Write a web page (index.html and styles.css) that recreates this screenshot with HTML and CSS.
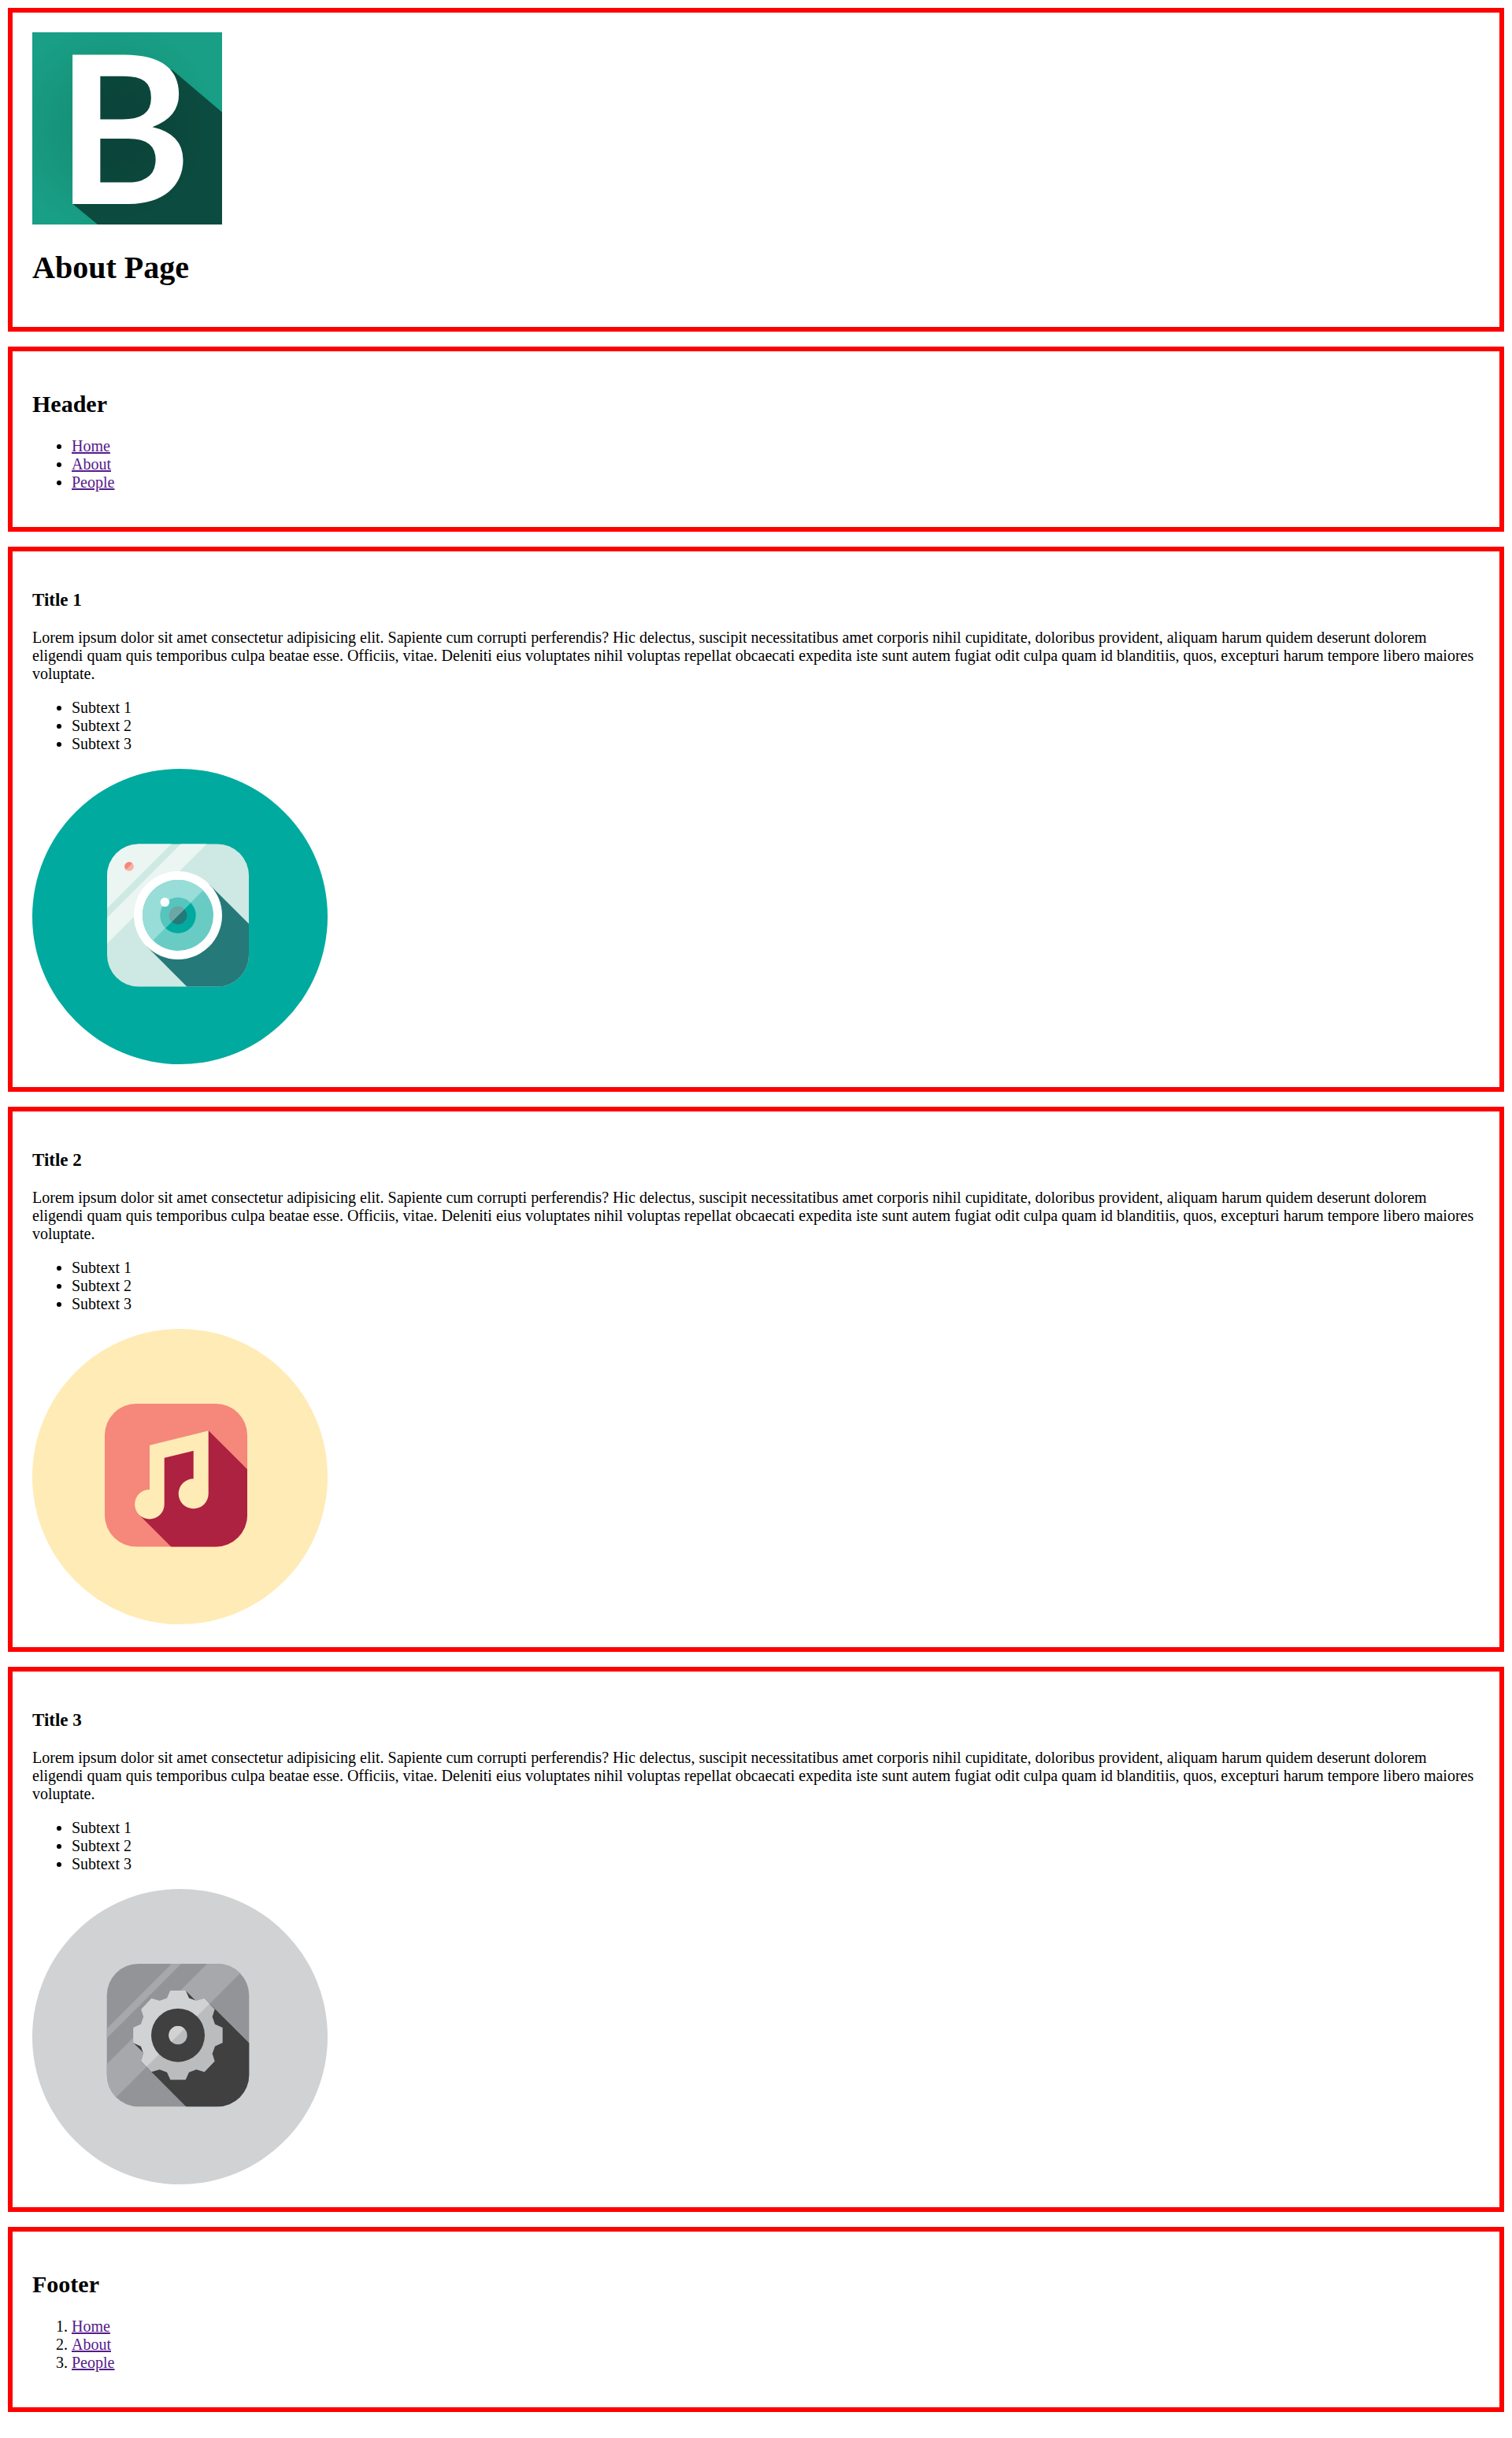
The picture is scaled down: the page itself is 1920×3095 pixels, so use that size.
FILE: index.html
```html
<!DOCTYPE html>
<html lang="en">
<head>
  <meta charset="utf-8">
  <title>About Page</title>
  <link rel="stylesheet" href="styles.css">
</head>
<body>
  <header class="box">
    <svg class="logo" viewBox="0 0 241 244" role="img" aria-label="B logo">
      <defs>
        <radialGradient id="logo-shade" cx="0.42" cy="0.5" r="0.55">
          <stop offset="0.3" stop-color="#000" stop-opacity="0.1"/>
          <stop offset="1" stop-color="#000" stop-opacity="0"/>
        </radialGradient>
      </defs>
      <rect width="241" height="244" fill="#189f85"/>
      <path d="M178 48 241 101.500V244H83L51.500 218 60 40H150Z" fill="#0c4c40"/>
      <rect width="241" height="244" fill="url(#logo-shade)"/>
      <text class="logo-letter" x="30" y="218">B</text>
    </svg>
    <h1 class="page-title">About Page</h1>
  </header>

  <nav class="box" aria-label="Main">
    <h2 class="section-title">Header</h2>
    <ul class="list">
      <li><a class="link" href="#home">Home</a></li>
      <li><a class="link" href="#about">About</a></li>
      <li><a class="link" href="#people">People</a></li>
    </ul>
  </nav>

  <section class="box">
    <h3 class="item-title">Title 1</h3>
    <p class="text">Lorem ipsum dolor sit amet consectetur adipisicing elit. Sapiente cum corrupti perferendis? Hic delectus, suscipit necessitatibus amet corporis nihil cupiditate, doloribus provident, aliquam harum quidem deserunt dolorem eligendi quam quis temporibus culpa beatae esse. Officiis, vitae. Deleniti eius voluptates nihil voluptas repellat obcaecati expedita iste sunt autem fugiat odit culpa quam id blanditiis, quos, excepturi harum tempore libero maiores voluptate.</p>
    <ul class="list">
      <li>Subtext 1</li>
      <li>Subtext 2</li>
      <li>Subtext 3</li>
    </ul>
    <svg class="picture" viewBox="0 0 375 375" role="img" aria-label="Camera">
      <defs>
        <clipPath id="camera-body"><rect x="95" y="95.5" width="180" height="181" rx="40"/></clipPath>
        <clipPath id="upper-left"><path d="M0 0H371L0 371Z"/></clipPath>
      </defs>
      <circle cx="187.5" cy="187.5" r="187.5" fill="#00aa9f"/>
      <g clip-path="url(#camera-body)">
        <path d="M95 95H275V277H95Z" fill="#cee9e3"/>
        <path d="M0 0H272L0 272ZM284 0H317L0 317V284Z" fill="#ebf5f2"/>
        <path d="M224.6 146.4 280 201.8V280H199.8L145.4 225.6Z" fill="#257979"/>
      </g>
      <circle cx="123" cy="124" r="5.8" fill="#f9b0a5"/>
      <path d="M118.9 128.1A5.8 5.8 0 0 1 127.1 119.9Z" fill="#f5867b"/>
      <circle cx="185" cy="186" r="56" fill="#fff"/>
      <circle cx="185" cy="186" r="45" fill="#68ccc5"/>
      <circle cx="185" cy="186" r="22.7" fill="#00aa9f"/>
      <circle cx="185" cy="186" r="11.4" fill="#257979"/>
      <g clip-path="url(#upper-left)">
        <circle cx="185" cy="186" r="45" fill="#99ddd8"/>
        <circle cx="185" cy="186" r="22.7" fill="#55c5bd"/>
        <circle cx="185" cy="186" r="11.4" fill="#6ea5a5"/>
      </g>
      <circle cx="168.4" cy="169.3" r="5.8" fill="#fff"/>
    </svg>
  </section>

  <section class="box">
    <h3 class="item-title">Title 2</h3>
    <p class="text">Lorem ipsum dolor sit amet consectetur adipisicing elit. Sapiente cum corrupti perferendis? Hic delectus, suscipit necessitatibus amet corporis nihil cupiditate, doloribus provident, aliquam harum quidem deserunt dolorem eligendi quam quis temporibus culpa beatae esse. Officiis, vitae. Deleniti eius voluptates nihil voluptas repellat obcaecati expedita iste sunt autem fugiat odit culpa quam id blanditiis, quos, excepturi harum tempore libero maiores voluptate.</p>
    <ul class="list">
      <li>Subtext 1</li>
      <li>Subtext 2</li>
      <li>Subtext 3</li>
    </ul>
    <svg class="picture" viewBox="0 0 375 375" role="img" aria-label="Music">
      <defs>
        <clipPath id="music-body"><rect x="92" y="95" width="181" height="181.5" rx="40"/></clipPath>
      </defs>
      <circle cx="187.5" cy="187.5" r="187.5" fill="#ffebb6"/>
      <g clip-path="url(#music-body)">
        <path d="M90 90H280V280H90Z" fill="#f5877b"/>
        <path d="M150 148 223.7 129 280 185.3V280H179.7L135.7 236 150 222Z" fill="#ad2141"/>
      </g>
      <path d="M149 147.7 223.7 129V209.3A19 19 0 1 1 204.7 190.3V154.7L167.7 163.7V222.7A18.8 18.8 0 1 1 149 203.9Z" fill="#ffebb6"/>
    </svg>
  </section>

  <section class="box">
    <h3 class="item-title">Title 3</h3>
    <p class="text">Lorem ipsum dolor sit amet consectetur adipisicing elit. Sapiente cum corrupti perferendis? Hic delectus, suscipit necessitatibus amet corporis nihil cupiditate, doloribus provident, aliquam harum quidem deserunt dolorem eligendi quam quis temporibus culpa beatae esse. Officiis, vitae. Deleniti eius voluptates nihil voluptas repellat obcaecati expedita iste sunt autem fugiat odit culpa quam id blanditiis, quos, excepturi harum tempore libero maiores voluptate.</p>
    <ul class="list">
      <li>Subtext 1</li>
      <li>Subtext 2</li>
      <li>Subtext 3</li>
    </ul>
    <svg class="picture" viewBox="0 0 375 375" role="img" aria-label="Settings">
      <defs>
        <clipPath id="gear-body"><rect x="94.7" y="95" width="180.6" height="181.3" rx="40"/></clipPath>
        <clipPath id="gear-light"><path d="M-300-300H300L-300 300Z"/></clipPath>
        <path id="gear" d="M-29-170H29L42-141 70-131 101-140 140-99 131-70 141-42 170-29V29L141 42 131 70 140 99 101 140 70 131 42 141 29 170H-29L-42 141-70 131-101 140-140 99-131 70-141 42-170 29V-29L-141-42-131-70-140-99-101-140-70-131-42-141Z"/>
      </defs>
      <circle cx="187.5" cy="187.5" r="187.5" fill="#d1d2d4"/>
      <g clip-path="url(#gear-body)">
        <path d="M90 90H280V280H90Z" fill="#939497"/>
        <path d="M272 0H284L0 284V272ZM317 0H371L0 371V317Z" fill="#a7a8ab"/>
        <g transform="translate(185 185.7) scale(0.3333)">
          <path d="M29-170 80-119-119 80-170 29ZM101-140 300 59V300H59L-140 101Z" fill="#404041"/>
          <use href="#gear" fill="#bbbcbe"/>
          <use href="#gear" fill="#d1d2d4" clip-path="url(#gear-light)"/>
          <circle r="102" fill="#404041"/>
          <circle r="35" fill="#bbbcbe"/>
          <circle r="35" fill="#d1d2d4" clip-path="url(#gear-light)"/>
        </g>
      </g>
    </svg>
  </section>

  <footer class="box">
    <h2 class="section-title">Footer</h2>
    <ol class="list">
      <li><a class="link" href="#home">Home</a></li>
      <li><a class="link" href="#about">About</a></li>
      <li><a class="link" href="#people">People</a></li>
    </ol>
  </footer>
</body>
</html>
```
FILE: styles.css
```css
body {
  margin: 10px;
  background: #fff;
  color: #000;
  font-family: "Liberation Serif", "Times New Roman", serif;
  font-size: 20px;
  line-height: 23px;
}

.box {
  display: flow-root;
  margin-bottom: 19px;
  padding: 25px;
  border: 6px solid #f00;
}

.logo {
  width: 241px;
  height: 244px;
}

.logo-letter {
  fill: #fff;
  font-family: Lato, sans-serif;
  font-size: 262px;
  font-weight: 700;
  line-height: 1;
}

.picture {
  display: block;
  width: 375px;
  height: 375px;
  margin-bottom: 4px;
}

.page-title {
  margin: 27px 0;
  font-size: 40px;
  line-height: 46px;
}

.section-title {
  margin: 25px 0;
  font-size: 30px;
  line-height: 34px;
}

.item-title {
  margin: 23px 0;
  font-size: 23px;
  line-height: 27px;
}

.text {
  margin: 20px 0;
}

.list {
  margin: 20px 0;
  padding-left: 50px;
}

.link {
  color: #551a8b;
}
```
